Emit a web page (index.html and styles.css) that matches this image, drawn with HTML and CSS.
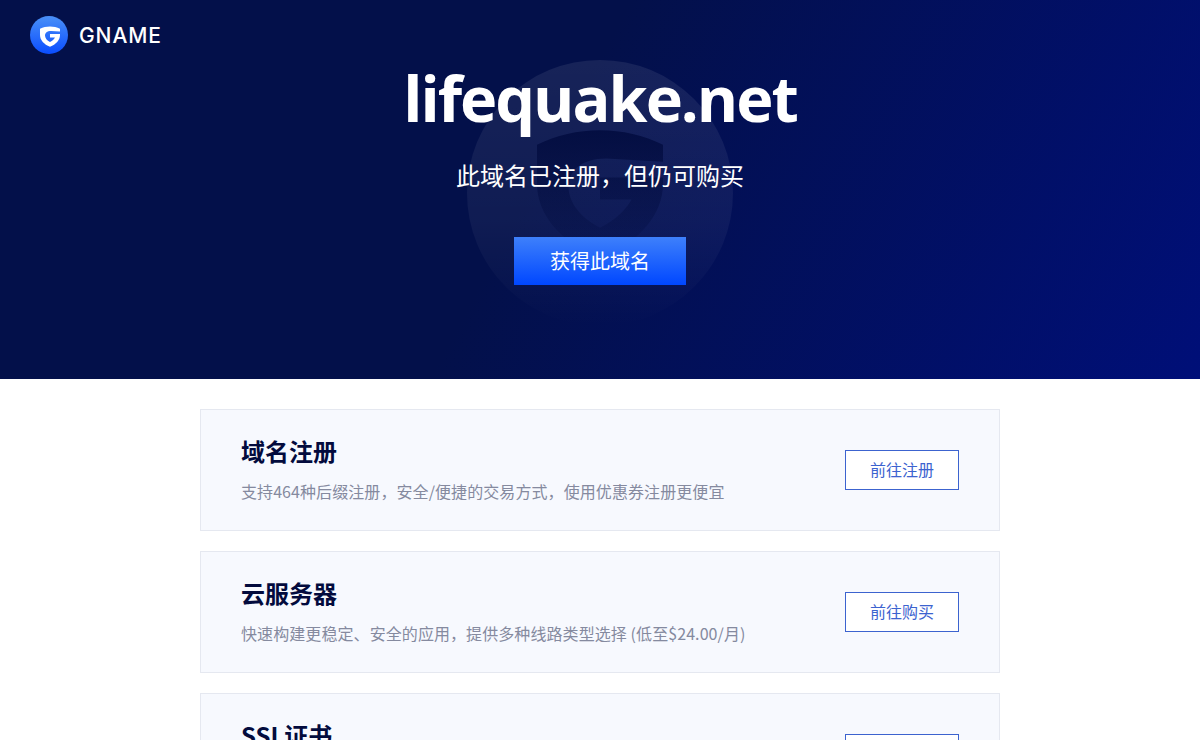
FILE: index.html
```html
<!DOCTYPE html>
<html lang="zh-CN">
  <head>
    <meta charset="utf-8">
    <title>lifequake.net</title>
    <link rel="stylesheet" href="styles.css">
  </head>
  <body>
    <div class="hero">
      <svg class="watermark" width="266" height="266" viewBox="0 0 266 266">
        <defs>
          <linearGradient id="ringFade" x1="0" y1="0" x2="0" y2="1">
            <stop offset="0" stop-color="#fff" stop-opacity="0.08"/>
            <stop offset="0.6" stop-color="#fff" stop-opacity="0.05"/>
            <stop offset="1" stop-color="#fff" stop-opacity="0"/>
          </linearGradient>
          <linearGradient id="shieldFade" x1="0" y1="0" x2="0" y2="1">
            <stop offset="0" stop-color="#010b3e" stop-opacity="0.85"/>
            <stop offset="1" stop-color="#010b3e" stop-opacity="0.1"/>
          </linearGradient>
        </defs>
        <circle cx="133" cy="133" r="133" fill="url(#ringFade)"/>
        <path transform="translate(7 4) scale(6.3)" d="M20 10.500C23.500 10.500 27 11.300 30 12.800V15.500L21 15C17 15 15 17 15 19.500C15 22 17 24.500 20 26C22.500 24.700 24 23.300 25 21.500H20V18H30V19C30 24 26 28.500 20 30.700C14 28.500 10 24 10 19V12.800C13 11.300 16.500 10.500 20 10.500Z" fill="url(#shieldFade)"/>
      </svg>
      <div class="logo">
        <svg class="logo-icon" width="38" height="38" viewBox="0 0 38 38">
          <defs>
            <linearGradient id="logoBg" x1="0" y1="0" x2="0" y2="1">
              <stop offset="0" stop-color="#4a90f7"/>
              <stop offset="1" stop-color="#0a4dff"/>
            </linearGradient>
          </defs>
          <circle cx="19" cy="19" r="19" fill="url(#logoBg)"/>
          <path d="M20 10.500C23.500 10.500 27 11.300 30 12.800V15.500L21 15C17 15 15 17 15 19.500C15 22 17 24.500 20 26C22.500 24.700 24 23.300 25 21.500H20V18H30V19C30 24 26 28.500 20 30.700C14 28.500 10 24 10 19V12.800C13 11.300 16.500 10.500 20 10.500Z" fill="#fff"/>
        </svg>
        <span class="logo-text">GNAME</span>
      </div>
      <h1 class="domain">lifequake.net</h1>
      <p class="tagline">此域名已注册，但仍可购买</p>
      <a class="get-btn" href="#">获得此域名</a>
    </div>

    <div class="list">
      <div class="card">
        <div class="card-info">
          <h2>域名注册</h2>
          <p>支持464种后缀注册，安全/便捷的交易方式，使用优惠券注册更便宜</p>
        </div>
        <a class="card-btn" href="#">前往注册</a>
      </div>
      <div class="card">
        <div class="card-info">
          <h2>云服务器</h2>
          <p>快速构建更稳定、安全的应用，提供多种线路类型选择 (低至$24.00/月)</p>
        </div>
        <a class="card-btn" href="#">前往购买</a>
      </div>
      <div class="card">
        <div class="card-info">
          <h2>SSL证书</h2>
          <p>保护网站数据安全，提升网站可信度</p>
        </div>
        <a class="card-btn" href="#">前往购买</a>
      </div>
    </div>
  </body>
</html>
```

FILE: styles.css
```css
html, body {
    margin: 0;
    padding: 0;
    height: 740px;
    overflow: hidden;
}

body {
    background-color: #fff;
    font-family: "Noto Sans CJK SC", "Noto Sans", sans-serif;
}

a {
    text-decoration: none;
}

.hero {
    position: relative;
    height: 379px;
    overflow: hidden;
    display: flex;
    flex-direction: column;
    align-items: center;
    background: linear-gradient(118deg, #03104a 0%, #03104a 45%, #000f78 100%);
}

.watermark {
    position: absolute;
    left: 467px;
    top: 60px;
}

.logo {
    align-self: flex-start;
    display: flex;
    align-items: center;
    gap: 11px;
    padding: 16px 0 0 30px;
    position: relative;
}

.logo-text {
    color: #fff;
    font-family: Inter, sans-serif;
    font-size: 21px;
    font-weight: 500;
    letter-spacing: 0.9px;
}

.domain {
    position: relative;
    margin: 0;
    height: 88px;
    line-height: 88px;
    color: #fff;
    font-family: "Open Sans", "Noto Sans", sans-serif;
    font-size: 63px;
    font-weight: 700;
    letter-spacing: -2px;
}

.tagline {
    position: relative;
    margin: 12px 0 0;
    height: 42px;
    line-height: 42px;
    color: #fff;
    font-size: 24px;
}

.get-btn {
    position: relative;
    margin-top: 41px;
    width: 172px;
    height: 48px;
    line-height: 48px;
    text-align: center;
    color: #fff;
    font-size: 20px;
    background: linear-gradient(180deg, #3e80fb 0%, #0047ff 100%);
}

.list {
    width: 800px;
    margin: 30px auto 0;
    display: flex;
    flex-direction: column;
    gap: 20px;
}

.card {
    box-sizing: border-box;
    height: 122px;
    flex-shrink: 0;
    padding: 0 40px;
    display: flex;
    align-items: center;
    justify-content: space-between;
    background-color: #f7f9fe;
    border: 1px solid #e5e8f0;
}

.card-info {
    margin-top: -3px;
}

.card-info h2 {
    margin: 0;
    height: 32px;
    line-height: 32px;
    color: #030b3d;
    font-size: 24px;
    font-weight: 700;
}

.card-info p {
    margin: 12px 0 0;
    height: 24px;
    line-height: 24px;
    color: #858a9f;
    font-size: 16px;
    letter-spacing: 0.08px;
}

.card-btn {
    box-sizing: border-box;
    width: 114px;
    height: 40px;
    line-height: 36px;
    text-align: center;
    color: #3c63cf;
    font-size: 16px;
    background-color: #fff;
    border: 1px solid #3c63cf;
}
```
